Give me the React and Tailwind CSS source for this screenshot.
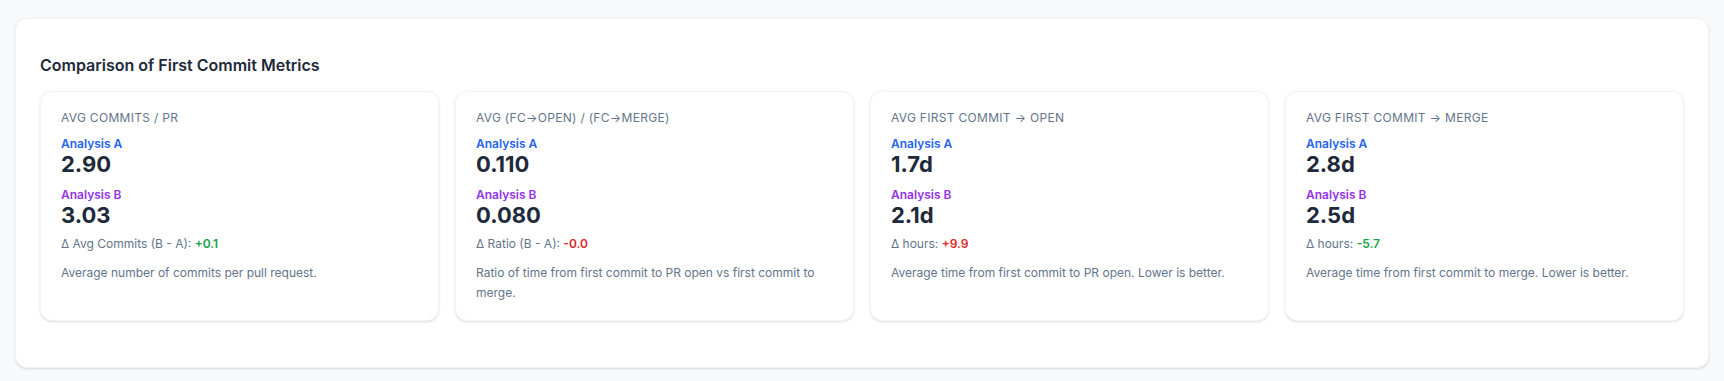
const metrics = [
  {
    label: 'Avg Commits / PR',
    a: '2.90',
    b: '3.03',
    deltaLabel: 'Δ Avg Commits (B - A):',
    delta: '+0.1',
    good: true,
    desc: 'Average number of commits per pull request.',
  },
  {
    label: 'Avg (FC→Open) / (FC→Merge)',
    a: '0.110',
    b: '0.080',
    deltaLabel: 'Δ Ratio (B - A):',
    delta: '-0.0',
    good: false,
    desc: 'Ratio of time from first commit to PR open vs first commit to merge.',
  },
  {
    label: 'Avg First Commit → Open',
    a: '1.7d',
    b: '2.1d',
    deltaLabel: 'Δ hours:',
    delta: '+9.9',
    good: false,
    desc: 'Average time from first commit to PR open. Lower is better.',
  },
  {
    label: 'Avg First Commit → Merge',
    a: '2.8d',
    b: '2.5d',
    deltaLabel: 'Δ hours:',
    delta: '-5.7',
    good: true,
    desc: 'Average time from first commit to merge. Lower is better.',
  },
];

function MetricCard({ m }) {
  return (
    <div className="rounded-xl border border-gray-100 bg-white px-5 pt-[18px] pb-[17px] shadow-sm">
      <div className="text-xs leading-4 uppercase tracking-wide text-[#64748b]">{m.label}</div>
      <div className="mt-[10px] text-xs leading-4 font-semibold text-[#2563eb]">Analysis A</div>
      <div className="text-[22px] leading-6 font-bold text-[#1e293b]">{m.a}</div>
      <div className="mt-[11px] text-xs leading-4 font-semibold text-[#9333ea]">Analysis B</div>
      <div className="text-[22px] leading-6 font-bold text-[#1e293b]">{m.b}</div>
      <div className="mt-[9px] text-xs leading-4 text-[#64748b]">
        {m.deltaLabel}{' '}
        <span className={m.good ? 'font-semibold text-[#16a34a]' : 'font-semibold text-[#dc2626]'}>{m.delta}</span>
      </div>
      <p className="mt-[11px] text-xs leading-5 text-[#64748b]">{m.desc}</p>
    </div>
  );
}

export default function App() {
  return (
    <div className="min-h-screen bg-[#f8f9fb] px-[15px] pt-[18px] font-['Inter',sans-serif]">
      <div className="rounded-xl border border-gray-100 bg-white px-6 pt-[34px] pb-[46px] shadow-sm">
        <h2 className="mb-[14px] text-base font-semibold text-[#1e293b]">Comparison of First Commit Metrics</h2>
        <div className="grid grid-cols-4 gap-4">
          {metrics.map((m) => (
            <MetricCard key={m.label} m={m} />
          ))}
        </div>
      </div>
    </div>
  );
}
